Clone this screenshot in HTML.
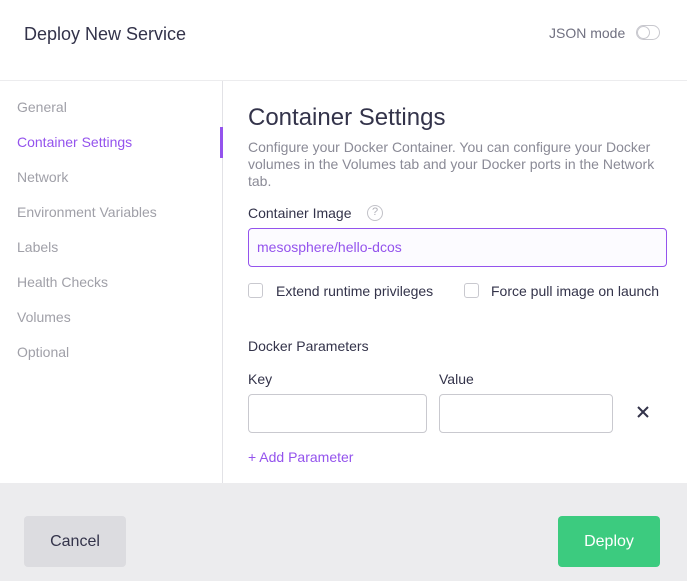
<!DOCTYPE html>
<html><head><style>
*{box-sizing:border-box;margin:0;padding:0}
body{width:687px;height:581px;background:#fff;font-family:"Liberation Sans",sans-serif;position:relative;overflow:hidden;color:#32324a}
.a{position:absolute;white-space:nowrap}
.nav{font-size:14px;color:#a0a0a8;left:17px}
.inp{position:absolute;border:1px solid #c9c9cf;border-radius:4px;background:#fff}
.cb{position:absolute;width:15px;height:15px;border:1px solid #c9c9cf;border-radius:3px}
</style></head><body>
<div class="a" style="left:24px;top:24px;font-size:18px;color:#33334a">Deploy New Service</div>
<div class="a" style="left:549px;top:25px;font-size:14px;color:#707080">JSON mode</div>
<div class="a" style="left:636px;top:25px;width:24px;height:15px;border:1px solid #c8c8ce;border-radius:8px"><div style="position:absolute;left:0;top:0;width:13px;height:13px;border-radius:50%;border:1px solid #c8c8ce;background:#fff"></div></div>
<div class="a" style="left:0;top:80px;width:687px;height:1px;background:#ececee"></div>
<div class="a" style="left:222px;top:81px;width:1px;height:402px;background:#e2e2e6"></div>
<div class="a" style="left:220px;top:127px;width:3px;height:31px;background:#9453ed"></div>
<div class="a nav" style="top:99px">General</div>
<div class="a nav" style="top:134px;color:#9453ed">Container Settings</div>
<div class="a nav" style="top:169px">Network</div>
<div class="a nav" style="top:204px">Environment Variables</div>
<div class="a nav" style="top:239px">Labels</div>
<div class="a nav" style="top:274px">Health Checks</div>
<div class="a nav" style="top:309px">Volumes</div>
<div class="a nav" style="top:344px">Optional</div>
<div class="a" style="left:248px;top:104px;font-size:24px;color:#33334a">Container Settings</div>
<div class="a" style="left:248px;top:139px;font-size:14px;line-height:17px;color:#8a8a96;white-space:normal;width:425px">Configure your Docker Container. You can configure your Docker volumes in the Volumes tab and your Docker ports in the Network tab.</div>
<div class="a" style="left:248px;top:205px;font-size:14px;color:#33334a">Container Image</div>
<div class="a" style="left:367px;top:205px;width:16px;height:16px;border:1.5px solid #c2c2c8;border-radius:50%;font-size:11px;color:#b0b0b8;text-align:center;line-height:13px">?</div>
<div class="inp" style="left:248px;top:228px;width:419px;height:39px;border-color:#9453ed;background:#fcfbff"></div>
<div class="a" style="left:257px;top:239px;font-size:14px;color:#9453ed">mesosphere/hello-dcos</div>
<div class="cb" style="left:248px;top:283px"></div>
<div class="a" style="left:276px;top:283px;font-size:14px;color:#33334a">Extend runtime privileges</div>
<div class="cb" style="left:464px;top:283px"></div>
<div class="a" style="left:491px;top:283px;font-size:14px;color:#33334a">Force pull image on launch</div>
<div class="a" style="left:248px;top:338px;font-size:14px;color:#33334a">Docker Parameters</div>
<div class="a" style="left:248px;top:371px;font-size:14px;color:#33334a">Key</div>
<div class="a" style="left:439px;top:371px;font-size:14px;color:#33334a">Value</div>
<div class="inp" style="left:248px;top:394px;width:179px;height:39px"></div>
<div class="inp" style="left:439px;top:394px;width:174px;height:39px"></div>
<svg class="a" style="left:637px;top:406px" width="12" height="12"><path d="M1 1L11 11M11 1L1 11" stroke="#33334a" stroke-width="2"/></svg>
<div class="a" style="left:248px;top:449px;font-size:14px;color:#9453ed">+ Add Parameter</div>
<div class="a" style="left:0;top:483px;width:687px;height:98px;background:#ececee"></div>
<div class="a" style="left:24px;top:516px;width:102px;height:51px;background:#dcdce0;border-radius:4px;font-size:16px;color:#33334a;text-align:center;line-height:51px">Cancel</div>
<div class="a" style="left:558px;top:516px;width:102px;height:51px;background:#3ccb7f;border-radius:4px;font-size:16px;color:#fff;text-align:center;line-height:51px">Deploy</div>
</body></html>
